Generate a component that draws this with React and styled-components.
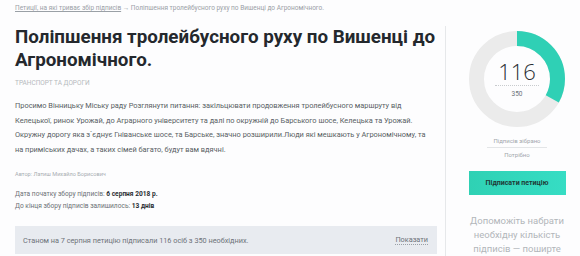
import React from 'react'
import styled, { createGlobalStyle } from 'styled-components'

const Global = createGlobalStyle`
  html, body { margin: 0; padding: 0; background: #fdfdfe; overflow: hidden; }
  body { font-family: Roboto, "Noto Sans", "Liberation Sans", sans-serif; }
`;

const Page = styled.div`
  display: flex;
  width: 600px;
  height: 256px;
  overflow: hidden;
`;

const Main = styled.div`
  width: 422px;
  padding-left: 15px;
  margin-right: 8px;
  display: flex;
  flex-direction: column;
`;

const Crumbs = styled.div`
  font-size: 6.5px;
  color: #9aa0a6;
  margin-top: 4px;
  white-space: nowrap;
  a { color: #9aa0a6; text-decoration: underline; }
`;

const Title = styled.h1`
  margin: 14px 0 0;
  font-size: 18.8px;
  line-height: 23px;
  font-weight: 700;
  color: #24282d;
`;

const Category = styled.div`
  margin-top: 7px;
  font-size: 6.5px;
  color: #b5b9bd;
  text-transform: uppercase;
`;

const Text = styled.p`
  margin: 12px 0 0;
  font-size: 7.4px;
  line-height: 14.5px;
  color: #585d63;
`;

const Author = styled.div`
  margin-top: 14px;
  font-size: 5.6px;
  color: #a8adb2;
`;

const Dates = styled.div`
  margin-top: 11px;
  font-size: 6.6px;
  line-height: 12px;
  color: #6b7075;
  b { color: #2a2e33; font-weight: 700; }
`;

const Status = styled.div`
  margin-top: 14px;
  height: 28px;
  background: #e8ebf0;
  display: flex;
  align-items: center;
  justify-content: space-between;
  padding: 0 9px 0 8px;
  font-size: 7.3px;
  color: #6d7278;
`;

const Show = styled.span`
  border-bottom: 1px dotted #9aa0a6;
  line-height: 9px;
`;

const Aside = styled.div`
  margin-top: 26px;
  width: 142px;
  border-left: 1px solid #e6e8ea;
  display: flex;
  flex-direction: column;
  align-items: center;
`;

const Ring = styled.div`
  position: relative;
  width: 96px;
  height: 96px;
  margin-top: 5px;
  svg { display: block; }
`;

const RingLabel = styled.div`
  position: absolute;
  inset: 0;
  display: flex;
  flex-direction: column;
  align-items: center;
  justify-content: center;
`;

const Count = styled.div`
  font-family: "Open Sans", Roboto, sans-serif;
  font-weight: 300;
  font-size: 22px;
  line-height: 22px;
  color: #2a2e33;
  padding: 0 3px 3px;
  border-bottom: 1px dotted #c8cbce;
`;

const Need = styled.div`
  font-size: 6.5px;
  color: #6d7278;
  margin-top: 4px;
`;

const Small = styled.div`
  font-size: 6px;
  color: #a2a7ac;
  padding: 0 6px 3px;
  border-bottom: ${p => (p.line ? '1px solid #e3e5e7' : 'none')};
  margin-top: ${p => p.top}px;
`;

const Button = styled.div`
  margin-top: 10px;
  width: 97px;
  height: 28px;
  background: linear-gradient(90deg, #2fd1b4, #36ddc4);
  display: flex;
  align-items: center;
  justify-content: center;
  font-size: 7px;
  font-weight: 700;
  color: #1f3a36;
`;

const Help = styled.div`
  margin-top: 19px;
  width: 112px;
  text-align: center;
  font-size: 9.5px;
  line-height: 14px;
  color: #b2b6ba;
`;

function Progress({ value, total }) {
  const r = 40.5
  const c = 2 * Math.PI * r
  const part = (value / total) * c
  return (
    <svg width="96" height="96" viewBox="0 0 96 96">
      <circle cx="48" cy="48" r={r} fill="none" stroke="#ebebeb" strokeWidth="15" />
      <circle
        cx="48" cy="48" r={r} fill="none" stroke="#2fd0b5" strokeWidth="15"
        strokeDasharray={`${part} ${c}`} transform="rotate(-90 48 48)"
      />
    </svg>
  )
}

export default function App() {
  return (
    <Page>
      <Global />
      <Main>
        <Crumbs>
          <a>Петиції, на які триває збір підписів</a> → Поліпшення тролейбусного руху по Вишенці до Агрономічного.
        </Crumbs>
        <Title>Поліпшення тролейбусного руху по Вишенці до Агрономічного.</Title>
        <Category>Транспорт та дороги</Category>
        <Text>
          Просимо Вінницьку Міську раду Розглянути питання: закільцювати продовження тролейбусного маршруту від<br />
          Келецької, ринок Урожай, до Аграрного університету та далі по окружній до Барського шосе, Келецька та Урожай.<br />
          Окружну дорогу яка з`єднує Гніванське шосе, та Барське, значно розширили.Люди які мешкають у Агрономічному, та<br />
          на примiських дачах, а таких сімей багато, будут вам вдячні.
        </Text>
        <Author>Автор: Латиш Михайло Борисович</Author>
        <Dates>
          Дата початку збору підписів: <b>6 серпня 2018 р.</b><br />
          До кінця збору підписів залишилось: <b>13 днів</b>
        </Dates>
        <Status>
          <span>Станом на 7 серпня петицію підписали 116 осіб з 350 необхідних.</span>
          <Show>Показати</Show>
        </Status>
      </Main>
      <Aside>
        <Ring>
          <Progress value={116} total={350} />
          <RingLabel>
            <Count>116</Count>
            <Need>350</Need>
          </RingLabel>
        </Ring>
        <Small top={10} line>Підписів зібрано</Small>
        <Small top={3}>Потрібно</Small>
        <Button>Підписати петицію</Button>
        <Help>Допоможіть набрати необхідну кількість підписів — поширте</Help>
      </Aside>
    </Page>
  )
}
